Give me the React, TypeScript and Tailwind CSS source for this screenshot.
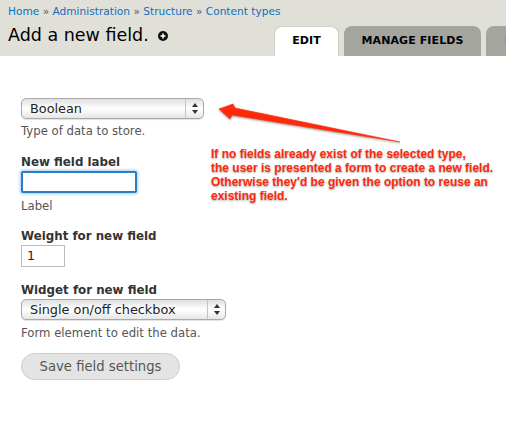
import React from "react";

const font = "font-['DejaVu_Sans',sans-serif]";

function Arrows() {
  return (
    <svg width="8" height="13" viewBox="0 0 8 13" className="block">
      <path d="M4 1 L7 5 H1 Z" fill="#333" />
      <path d="M4 12 L7 8 H1 Z" fill="#333" />
    </svg>
  );
}

function FakeSelect({ value, w }: { value: string; w: string }) {
  return (
    <div className={`${w} h-[21px] flex items-stretch rounded-[5px] border border-[#a9a9a9] bg-gradient-to-b from-[#e0e0e0] via-[#ffffff] to-[#e6e6e6] text-[12.85px] text-[#222] shadow-[0_1px_1px_rgba(0,0,0,0.12)]`}>
      <div className="flex-1 flex items-center pl-[8px] pt-[1px] whitespace-nowrap">{value}</div>
      <div className="w-[18px] border-l border-[#c4c4c4] flex items-center justify-center">
        <Arrows />
      </div>
    </div>
  );
}

function Label({ children, className }: { children: React.ReactNode; className: string }) {
  return <div className={`text-[11.85px] leading-[15px] font-bold text-[#333] whitespace-nowrap ${className}`}>{children}</div>;
}

function Help({ children, className }: { children: React.ReactNode; className: string }) {
  return <div className={`text-[11.7px] leading-[14px] text-[#555] whitespace-nowrap ${className}`}>{children}</div>;
}

function Tab({ children, active, w, className = "justify-center" }: { children: React.ReactNode; active?: boolean; w: string; className?: string }) {
  return (
    <div className={`${w} h-[30px] shrink-0 flex items-center rounded-t-[8px] text-[11px] font-bold text-black tracking-[0.1px] whitespace-nowrap ${className} ${active ? "bg-white border border-b-0 border-[#cfcfc8]" : "bg-[#a5a5a0]"}`}>
      {children}
    </div>
  );
}

export default function App() {
  return (
    <div className={`relative w-[506px] h-[421px] overflow-hidden bg-white ${font}`}>
      <header className="relative h-[56px] bg-[#e0e0d8] pl-[8px] overflow-hidden">
        <div className="pt-[4px] text-[10.6px] leading-[14px] text-[#0f6fbf] whitespace-nowrap">
          Home <span className="text-[#555]">»</span> Administration <span className="text-[#555]">»</span> Structure <span className="text-[#555]">»</span> Content types
        </div>
        <div className="mt-[5px] flex items-center gap-[9px]">
          <h1 className="text-[17.5px] leading-[24px] text-black whitespace-nowrap">Add a new field.</h1>
          <svg width="10" height="10" viewBox="0 0 10 10" className="mt-[1px]">
            <circle cx="5" cy="5" r="5" fill="#111" />
            <path d="M5 2.5 V7.5 M2.5 5 H7.5" stroke="#fff" strokeWidth="1.6" />
          </svg>
        </div>
        <div className="absolute left-[274px] top-[26px] flex gap-[5px]">
          <Tab active w="w-[65px]">EDIT</Tab>
          <Tab w="w-[137px]">MANAGE FIELDS</Tab>
          <Tab w="w-[60px]" className="justify-start pl-[19px]">DISPLAY</Tab>
        </div>
      </header>

      <main className="px-[21px] pt-[42px]">
        <FakeSelect value="Boolean" w="w-[183px]" />
        <Help className="mt-[5px]">Type of data to store.</Help>
        <Label className="mt-[17px]">New field label</Label>
        <div className="mt-[1px] w-[116px] h-[22px] bg-white border-2 border-[#2a7fc4] rounded-[2px] shadow-[0_0_3px_1px_rgba(90,160,220,0.55)]" />
        <Help className="mt-[6px]">Label</Help>
        <Label className="mt-[16px]">Weight for new field</Label>
        <div className="mt-[1px] w-[44px] h-[22px] flex items-center pl-[5px] border border-[#bbb] text-[12.6px] text-[#222]">1</div>
        <Label className="mt-[16px]">Widget for new field</Label>
        <div className="mt-[1px]"><FakeSelect value="Single on/off checkbox" w="w-[205px]" /></div>
        <Help className="mt-[6px]">Form element to edit the data.</Help>
        <div className="mt-[13px] w-[159px] h-[27px] flex items-center justify-center rounded-full border border-[#ccc] bg-[#e4e4e4] text-[13.2px] text-[#555] whitespace-nowrap">
          Save field settings
        </div>
      </main>

      <svg width="190" height="50" viewBox="0 0 190 50" className="absolute left-[210px] top-[98px]">
        <path d="M9 11 L23 6 L25 10 L190 44 L22 17 L20 21 Z" fill="#ff2a0a" stroke="#ff2a0a" strokeWidth="0.6" style={{ filter: "drop-shadow(0 1px 1px rgba(0,0,0,0.4))" }} />
      </svg>

      <div className="absolute left-[211px] top-[147px] font-['Liberation_Sans',sans-serif] font-bold text-[12px] leading-[14px] text-[#ff2a0a] whitespace-nowrap [text-shadow:0_1px_2px_rgba(0,0,0,0.35)]">
        <div>If no fields already exist of the selected type,</div>
        <div>the user is presented a form to create a new field.</div>
        <div>Otherwise they'd be given the option to reuse an</div>
        <div>existing field.</div>
      </div>
    </div>
  );
}
